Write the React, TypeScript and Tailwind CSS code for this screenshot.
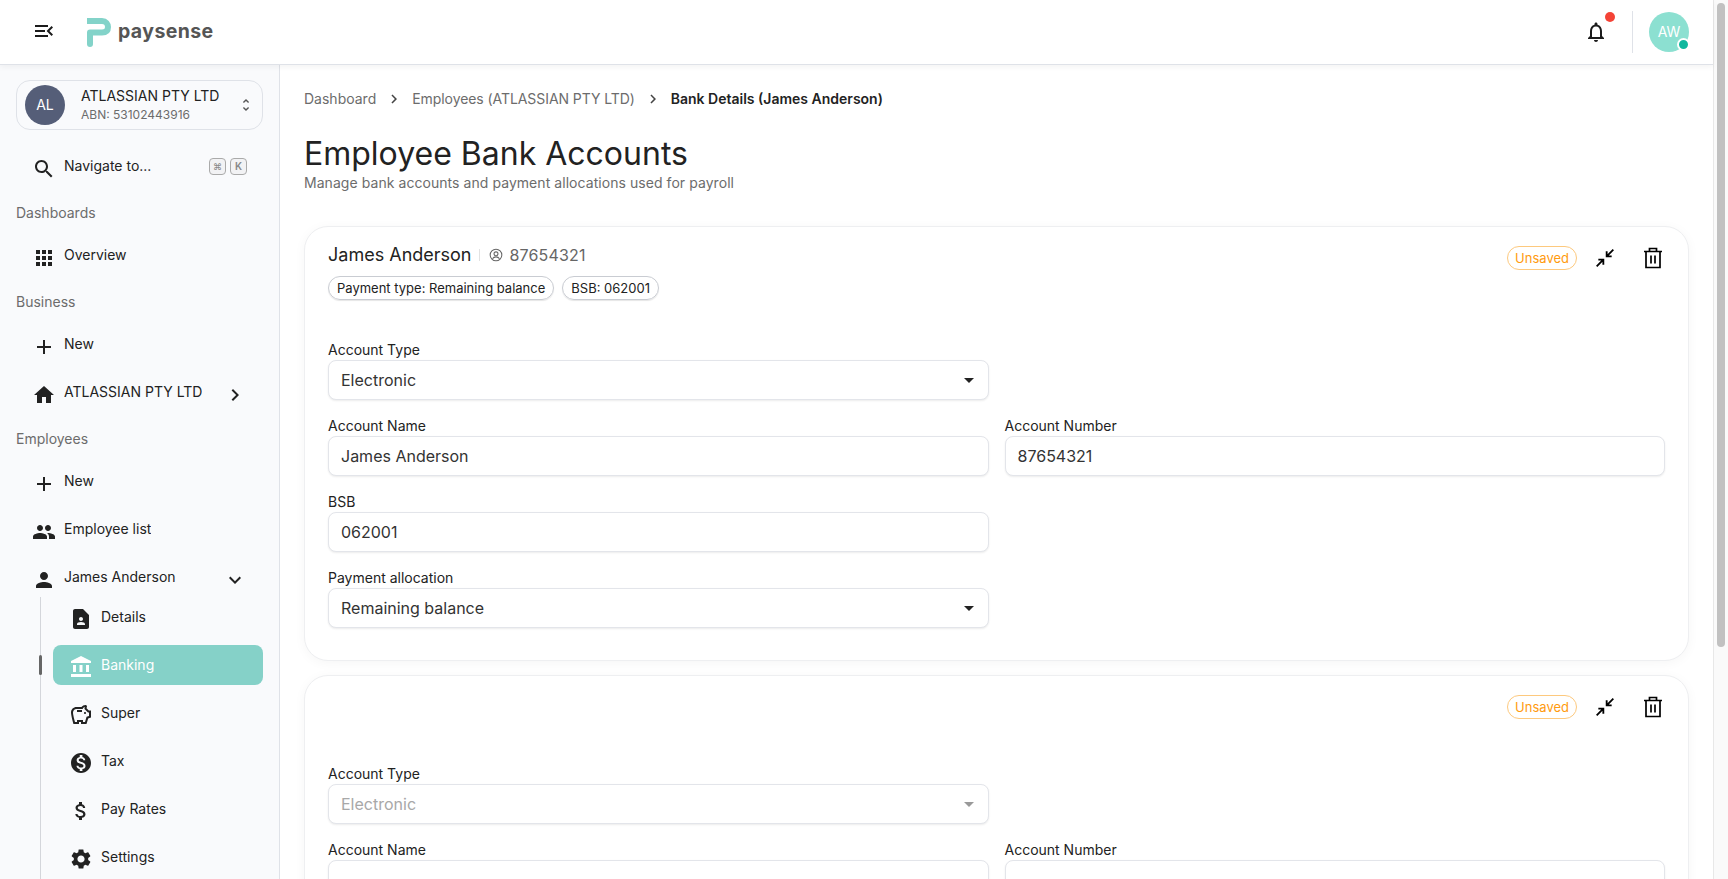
import React from 'react'

const P = {
  menuOpen: 'M3 18h13v-2H3v2zm0-5h10v-2H3v2zm0-7v2h13V6H3zm18 9.59L17.42 12 21 8.41 19.59 7l-5 5 5 5L21 15.59z',
  search: 'M15.5 14h-.79l-.28-.27C15.41 12.59 16 11.11 16 9.5 16 5.91 13.09 3 9.5 3S3 5.91 3 9.5 5.91 16 9.5 16c1.61 0 3.09-.59 4.23-1.57l.27.28v.79l5 4.99L20.49 19l-4.99-5zm-6 0C7.01 14 5 11.99 5 9.5S7.01 5 9.5 5 14 7.01 14 9.5 11.99 14 9.5 14z',
  apps: 'M4 8h4V4H4v4zm6 12h4v-4h-4v4zm-6 0h4v-4H4v4zm0-6h4v-4H4v4zm6 0h4v-4h-4v4zm6-10v4h4V4h-4zm-6 4h4V4h-4v4zm6 6h4v-4h-4v4zm0 6h4v-4h-4v4z',
  add: 'M19 13h-6v6h-2v-6H5v-2h6V5h2v6h6v2z',
  home: 'M10 20v-6h4v6h5v-8h3L12 3 2 12h3v8z',
  chevronRight: 'M10 6 8.59 7.41 13.17 12l-4.58 4.59L10 18l6-6z',
  expandMore: 'M16.59 8.59 12 13.17 7.41 8.59 6 10l6 6 6-6z',
  people: 'M16 11c1.66 0 2.99-1.34 2.99-3S17.66 5 16 5c-1.66 0-3 1.34-3 3s1.34 3 3 3zm-8 0c1.66 0 2.99-1.34 2.99-3S9.66 5 8 5C6.34 5 5 6.34 5 8s1.34 3 3 3zm0 2c-2.33 0-7 1.17-7 3.5V19h14v-2.5c0-2.33-4.67-3.5-7-3.5zm8 0c-.29 0-.62.02-.97.05 1.16.84 1.97 1.97 1.97 3.45V19h6v-2.5c0-2.33-4.67-3.5-7-3.5z',
  person: 'M12 12c2.21 0 4-1.79 4-4s-1.79-4-4-4-4 1.79-4 4 1.79 4 4 4zm0 2c-2.67 0-8 1.34-8 4v2h16v-2c0-2.66-5.33-4-8-4z',
  contact: 'M14 2H6c-1.1 0-2 .9-2 2v16c0 1.1.9 2 2 2h12c1.1 0 2-.9 2-2V8l-6-6zm-2 8c1.1 0 2 .9 2 2s-.9 2-2 2-2-.9-2-2 .9-2 2-2zm4 8H8v-.57c0-.81.48-1.53 1.22-1.85.85-.37 1.79-.58 2.78-.58.99 0 1.93.21 2.78.58.74.32 1.22 1.04 1.22 1.85V18z',
  bank: 'M4 10h3v7H4zm6.5 0h3v7h-3zM2 19h20v3H2zm15-9h3v7h-3zm-5-9L2 6v2h20V6z',
  savings: 'M15 10c0-.55.45-1 1-1s1 .45 1 1-.45 1-1 1-1-.45-1-1zM8 9h5V7H8v2zm14-1.5v6.97l-2.82.94L17.5 21H12v-2h-2v2H4.5S2 12.54 2 9.5 4.46 4 7.5 4h5c.91-1.21 2.36-2 4-2 .83 0 1.5.67 1.5 1.5 0 .21-.04.4-.12.58-.14.32-.26.69-.32 1.09l2.27 2.33H22zm-2 2h-1L15.5 6c0-.65.09-1.29.26-1.91-.97.25-1.76.97-2.09 1.91H7.5C5.57 6 4 7.57 4 9.5c0 1.88 1.22 6.65 2.01 9.5H8v-2h6v2h2.01l1.55-5.15 2.44-.82V9.5z',
  tax: 'M12 2C6.48 2 2 6.48 2 12s4.48 10 10 10 10-4.48 10-10S17.52 2 12 2zm1.41 16.09V20h-2.67v-1.93c-1.71-.36-3.16-1.46-3.27-3.4h1.96c.1 1.05.82 1.87 2.65 1.87 1.96 0 2.4-.98 2.4-1.59 0-.83-.44-1.61-2.67-2.14-2.48-.6-4.18-1.62-4.18-3.67 0-1.72 1.39-2.84 3.11-3.21V4h2.67v1.95c1.86.45 2.79 1.86 2.85 3.39H14.3c-.05-1.11-.64-1.87-2.22-1.87-1.5 0-2.4.68-2.4 1.64 0 .84.65 1.39 2.67 1.91s4.18 1.39 4.18 3.91c-.01 1.83-1.38 2.83-3.12 3.16z',
  money: 'M11.8 10.9c-2.27-.59-3-1.2-3-2.15 0-1.09 1.01-1.85 2.7-1.85 1.78 0 2.44.85 2.5 2.1h2.21c-.07-1.72-1.12-3.3-3.21-3.81V3h-3v2.16c-1.94.42-3.5 1.68-3.5 3.61 0 2.31 1.91 3.46 4.7 4.13 2.5.6 3 1.48 3 2.41 0 .69-.49 1.79-2.7 1.79-2.06 0-2.87-.92-2.98-2.1h-2.2c.12 2.19 1.76 3.42 3.68 3.83V21h3v-2.15c1.95-.37 3.5-1.5 3.5-3.55 0-2.84-2.43-3.81-4.7-4.4z',
  settings: 'M19.14 12.94c.04-.3.06-.61.06-.94 0-.32-.02-.64-.07-.94l2.03-1.58c.18-.14.23-.41.12-.61l-1.92-3.32c-.12-.22-.37-.29-.59-.22l-2.39.96c-.5-.38-1.03-.7-1.62-.94l-.36-2.54c-.04-.24-.24-.41-.48-.41h-3.84c-.24 0-.43.17-.47.41l-.36 2.54c-.59.24-1.13.57-1.62.94l-2.39-.96c-.22-.08-.47 0-.59.22L2.74 8.87c-.12.21-.08.47.12.61l2.03 1.58c-.05.3-.09.63-.09.94s.02.64.07.94l-2.03 1.58c-.18.14-.23.41-.12.61l1.92 3.32c.12.22.37.29.59.22l2.39-.96c.5.38 1.03.7 1.62.94l.36 2.54c.05.24.24.41.48.41h3.84c.24 0 .44-.17.47-.41l.36-2.54c.59-.24 1.13-.56 1.62-.94l2.39.96c.22.08.47 0 .59-.22l1.92-3.32c.12-.22.07-.47-.12-.61l-2.01-1.58zM12 15.6c-1.98 0-3.6-1.62-3.6-3.6s1.62-3.6 3.6-3.6 3.6 1.62 3.6 3.6-1.62 3.6-3.6 3.6z',
  bell: 'M12 22c1.1 0 2-.9 2-2h-4c0 1.1.9 2 2 2zm6-6v-5c0-3.07-1.63-5.64-4.5-6.32V4c0-.83-.67-1.5-1.5-1.5s-1.5.67-1.5 1.5v.68C7.64 5.36 6 7.92 6 11v5l-2 2v1h16v-1l-2-2zm-2 1H8v-6c0-2.48 1.51-4.5 4-4.5s4 2.02 4 4.5v6z',
  unfold: 'M12 5.83 15.17 9l1.41-1.41L12 3 7.41 7.59 8.83 9 12 5.83zm0 12.34L8.83 15l-1.41 1.41L12 21l4.59-4.59L15.17 15 12 18.17z',
}

function Icon({ d, className }: { d: string; className?: string }) {
  return (
    <svg viewBox="0 0 24 24" fill="currentColor" className={className}>
      <path d={d} />
    </svg>
  )
}

function TrashIcon() {
  return (
    <svg viewBox="0 0 20 22" fill="none" stroke="#000" strokeWidth="1.7" className="w-5 h-[22px]">
      <path d="M1 4.5h18M3 4.5V20.5h14V4.5M6.5 4.5V1.5h7v3M8 8.5v8M12 8.5v8" />
    </svg>
  )
}

function CollapseIcon() {
  return (
    <svg viewBox="0 0 24 24" fill="none" stroke="#000" strokeWidth="2.2" className="w-5 h-5 ml-[18px]">
      <path d="M22 2L14 10M14 4V10H20M2 22L10 14M4 14H10V20" />
    </svg>
  )
}

function Logo() {
  return (
    <div className="flex items-center gap-[7px]">
      <svg viewBox="0 0 24 29" className="w-6 h-[29px]" fill="none">
        <path d="M0 3H15C19 3 21 6 21 9C21 12.5 19 14.5 15 14.5H3V26" stroke="#83d3c9" strokeWidth="6" strokeLinejoin="round" />
        <circle cx="3" cy="26" r="3" fill="#83d3c9" />
      </svg>
      <span className="text-[19.5px] font-bold text-[#555] tracking-[0.02em] leading-none">paysense</span>
    </div>
  )
}

function Header() {
  return (
    <header className="h-[65px] shrink-0 flex items-center bg-white border-b border-[#dfe2e8] shadow-[0_2px_6px_rgba(0,0,0,0.05)] relative z-10">
      <Icon d={P.menuOpen} className="w-6 h-6 ml-[32px] text-[#1c1c1c] mb-[2px]" />
      <div className="ml-[31px]"><Logo /></div>
      <div className="ml-auto flex items-center mr-[24px]">
        <div className="relative mr-[24px]">
          <Icon d={P.bell} className="w-6 h-6 text-[#1c1c1c]" />
          <span className="absolute -top-[8px] right-[-7px] w-[10px] h-[10px] rounded-full bg-[#f44336]" />
        </div>
        <div className="w-px h-[42px] bg-[#dfe2e8] mr-[16px]" />
        <div className="relative w-10 h-10 rounded-full bg-[#8ce0d1] flex items-center justify-center text-white text-sm">
          AW
          <span className="absolute right-[-1px] bottom-[1px] w-[9px] h-[9px] rounded-full bg-[#10b89e] border-2 border-white box-content" />
        </div>
      </div>
    </header>
  )
}

function NavItem({ d, label, chevron }: { d: string; label: string; chevron?: string }) {
  return (
    <div className="h-12 shrink-0 flex items-center pl-[32px] pr-[32px] text-sm text-[#222]">
      <Icon d={d} className="w-6 h-6 mt-[5px]" />
      <span className="ml-[8px] truncate">{label}</span>
      {chevron && <Icon d={chevron} className="ml-auto w-6 h-6 mt-[5px]" />}
    </div>
  )
}

function SubItem({ d, label, active }: { d: string; label: string; active?: boolean }) {
  return (
    <div className={`h-10 shrink-0 flex items-center pl-4 rounded-lg text-sm ${active ? 'bg-[#85d1c8] text-white' : 'text-[#222]'}`}>
      <Icon d={d} className="w-6 h-6 shrink-0 mt-[4px]" />
      <span className="ml-[8px]">{label}</span>
    </div>
  )
}

function SectionLabel({ children }: { children: React.ReactNode }) {
  return <div className="h-[24px] shrink-0 mt-[11px] pl-4 text-sm leading-[24px] text-[#6c6c6c]">{children}</div>
}

function Sidebar() {
  return (
    <aside className="w-[280px] shrink-0 bg-[#f9fafc] border-r border-[#dfe2e8] overflow-hidden flex flex-col">
      <div className="mx-4 mt-[15px] h-[50px] w-[247px] shrink-0 rounded-[14px] border border-[#dfe2e8] flex items-center pl-[8px] pr-[8px]">
        <div className="w-10 h-10 rounded-full bg-[#555e78] text-white text-sm flex items-center justify-center shrink-0">AL</div>
        <div className="ml-4 min-w-0">
          <div className="text-sm leading-[20px] text-[#222]">ATLASSIAN PTY LTD</div>
          <div className="text-xs leading-[18px] text-[#6c6c6c]">ABN: 53102443916</div>
        </div>
        <Icon d={P.unfold} className="ml-auto w-4 h-4 text-[#555]" />
      </div>

      <div className="h-12 mt-[12px] shrink-0 flex items-center pl-[32px] pr-[32px] text-sm text-[#222]">
        <Icon d={P.search} className="w-6 h-6 mt-[5px]" />
        <span className="ml-[8px]">Navigate to...</span>
        <div className="ml-auto flex gap-[4px]">
          <kbd className="w-[17px] h-[17px] rounded-[4px] border border-[#aaa] bg-[#f2f2f4] text-[9px] leading-[15px] text-center text-[#888] font-['Inter',sans-serif]">⌘</kbd>
          <kbd className="w-[17px] h-[17px] rounded-[4px] border border-[#aaa] bg-[#f2f2f4] text-[10px] font-semibold leading-[15px] text-center text-[#888] font-['Inter',sans-serif]">K</kbd>
        </div>
      </div>

      <SectionLabel>Dashboards</SectionLabel>
      <div className="mt-[6px]"><NavItem d={P.apps} label="Overview" /></div>
      <SectionLabel>Business</SectionLabel>
      <div className="mt-[6px]"><NavItem d={P.add} label="New" /></div>
      <NavItem d={P.home} label="ATLASSIAN PTY LTD" chevron={P.chevronRight} />
      <SectionLabel>Employees</SectionLabel>
      <div className="mt-[6px]"><NavItem d={P.add} label="New" /></div>
      <NavItem d={P.people} label="Employee list" />
      <NavItem d={P.person} label="James Anderson" chevron={P.expandMore} />

      <div className="relative flex-1 flex flex-col gap-2 ml-[40px] mr-[16px] pl-[12px] border-l border-[#d4d6db] -mt-[4px]">
        <span className="absolute left-[-2px] top-[58px] w-[3px] h-5 rounded-sm bg-[#666]" />
        <SubItem d={P.contact} label="Details" />
        <SubItem d={P.bank} label="Banking" active />
        <SubItem d={P.savings} label="Super" />
        <SubItem d={P.tax} label="Tax" />
        <SubItem d={P.money} label="Pay Rates" />
        <SubItem d={P.settings} label="Settings" />
      </div>
    </aside>
  )
}

function Field({ label, value, select, disabled }: { label: string; value?: string; select?: boolean; disabled?: boolean }) {
  return (
    <div>
      <div className="text-sm leading-[20px] text-[#222]">{label}</div>
      <div className="h-10 rounded-lg border border-[#e3e5ea] bg-white shadow-[0_1px_2px_rgba(0,0,0,0.08)] flex items-center pl-[12px] pr-[14px]">
        <span className={`text-base ${disabled ? 'text-[#a8a8a8]' : 'text-[#333]'}`}>{value}</span>
        {select && (
          <span className={`ml-auto w-0 h-0 border-x-[5px] border-x-transparent border-t-[5px] ${disabled ? 'border-t-[#999]' : 'border-t-[#222]'}`} />
        )}
      </div>
    </div>
  )
}

function Chip({ children }: { children: React.ReactNode }) {
  return (
    <span className="h-6 px-[8px] rounded-full border border-[#c9ccd2] shadow-[0_1px_1px_rgba(0,0,0,0.1)] text-[13px] leading-[22px] text-[#222]">
      {children}
    </span>
  )
}

function CardActions() {
  return (
    <div className="absolute right-[25px] top-[19px] flex items-center">
      <span className="h-6 px-[7px] rounded-full border border-[#fdc97e] text-[13px] leading-[22px] text-[#ff9b0f]">Unsaved</span>
      <CollapseIcon />
      <span className="ml-[28px]"><TrashIcon /></span>
    </div>
  )
}

function Main() {
  return (
    <main className="flex-1 min-w-0 overflow-hidden bg-white pl-[24px] pr-[24px]">
      <div className="flex items-center h-5 mt-[24px] text-sm text-[#6c6c6c]">
        <span>Dashboard</span>
        <Icon d={P.chevronRight} className="w-[18px] h-[18px] mx-[9px] text-[#444]" />
        <span className="tracking-[-0.005em]">Employees (ATLASSIAN PTY LTD)</span>
        <Icon d={P.chevronRight} className="w-[18px] h-[18px] mx-[9px] text-[#444]" />
        <span className="font-semibold text-[#222]">Bank Details (James Anderson)</span>
      </div>
      <h1 className="mt-[24px] text-[32px] leading-[41px] text-[#222]">Employee Bank Accounts</h1>
      <p className="text-sm leading-[18px] text-[#6c6c6c] tracking-[0.004em]">Manage bank accounts and payment allocations used for payroll</p>

      <section className="relative mt-[34px] rounded-[24px] border border-[#eeeff1] bg-white shadow-[0_2px_12px_rgba(0,0,0,0.04)] px-[23px] pt-[15px] pb-[32px]">
        <CardActions />
        <div className="flex items-center h-7 pb-[3px]">
          <span className="text-[18px] text-[#222]">James Anderson</span>
          <span className="w-px h-3 bg-[#e2e2e2] mx-[8px]" />
          <svg viewBox="0 0 24 24" fill="none" stroke="#666" strokeWidth="1.8" className="w-[14px] h-[14px] ml-[1px] mr-[6px]">
            <circle cx="12" cy="12" r="10" />
            <circle cx="12" cy="10" r="3.4" />
            <path d="M6 18.5c1.5-2.5 3.8-3.3 6-3.3s4.5.8 6 3.3" />
          </svg>
          <span className="text-base text-[#666] tracking-[0.01em]">87654321</span>
        </div>
        <div className="flex gap-2 mt-[6px]">
          <Chip>Payment type: Remaining balance</Chip>
          <Chip>BSB: 062001</Chip>
        </div>
        <div className="grid grid-cols-2 gap-x-4 gap-y-[16px] mt-[40px]">
          <Field label="Account Type" value="Electronic" select />
          <div />
          <Field label="Account Name" value="James Anderson" />
          <Field label="Account Number" value="87654321" />
          <Field label="BSB" value="062001" />
          <div />
          <Field label="Payment allocation" value="Remaining balance" select />
        </div>
      </section>

      <section className="relative mt-[14px] rounded-[24px] border border-[#eeeff1] bg-white shadow-[0_2px_12px_rgba(0,0,0,0.04)] px-[23px] pt-[15px] pb-[32px]">
        <CardActions />
        <div className="h-[33px]" />
        <div className="grid grid-cols-2 gap-x-4 gap-y-[16px] mt-[40px]">
          <Field label="Account Type" value="Electronic" select disabled />
          <div />
          <Field label="Account Name" />
          <Field label="Account Number" />
        </div>
      </section>
    </main>
  )
}

export default function App() {
  return (
    <div className="h-screen flex overflow-hidden font-['Inter','Liberation_Sans',sans-serif]">
      <div className="flex-1 min-w-0 flex flex-col">
        <Header />
        <div className="flex-1 min-h-0 flex">
          <Sidebar />
          <Main />
        </div>
      </div>
      <div className="w-[15px] shrink-0 bg-[#fafafa] border-l border-[#e8e8e8] pt-[3px] pl-[3px]">
        <div className="w-[8px] h-[644px] rounded-full bg-[#c1c1c1]" />
      </div>
    </div>
  )
}
